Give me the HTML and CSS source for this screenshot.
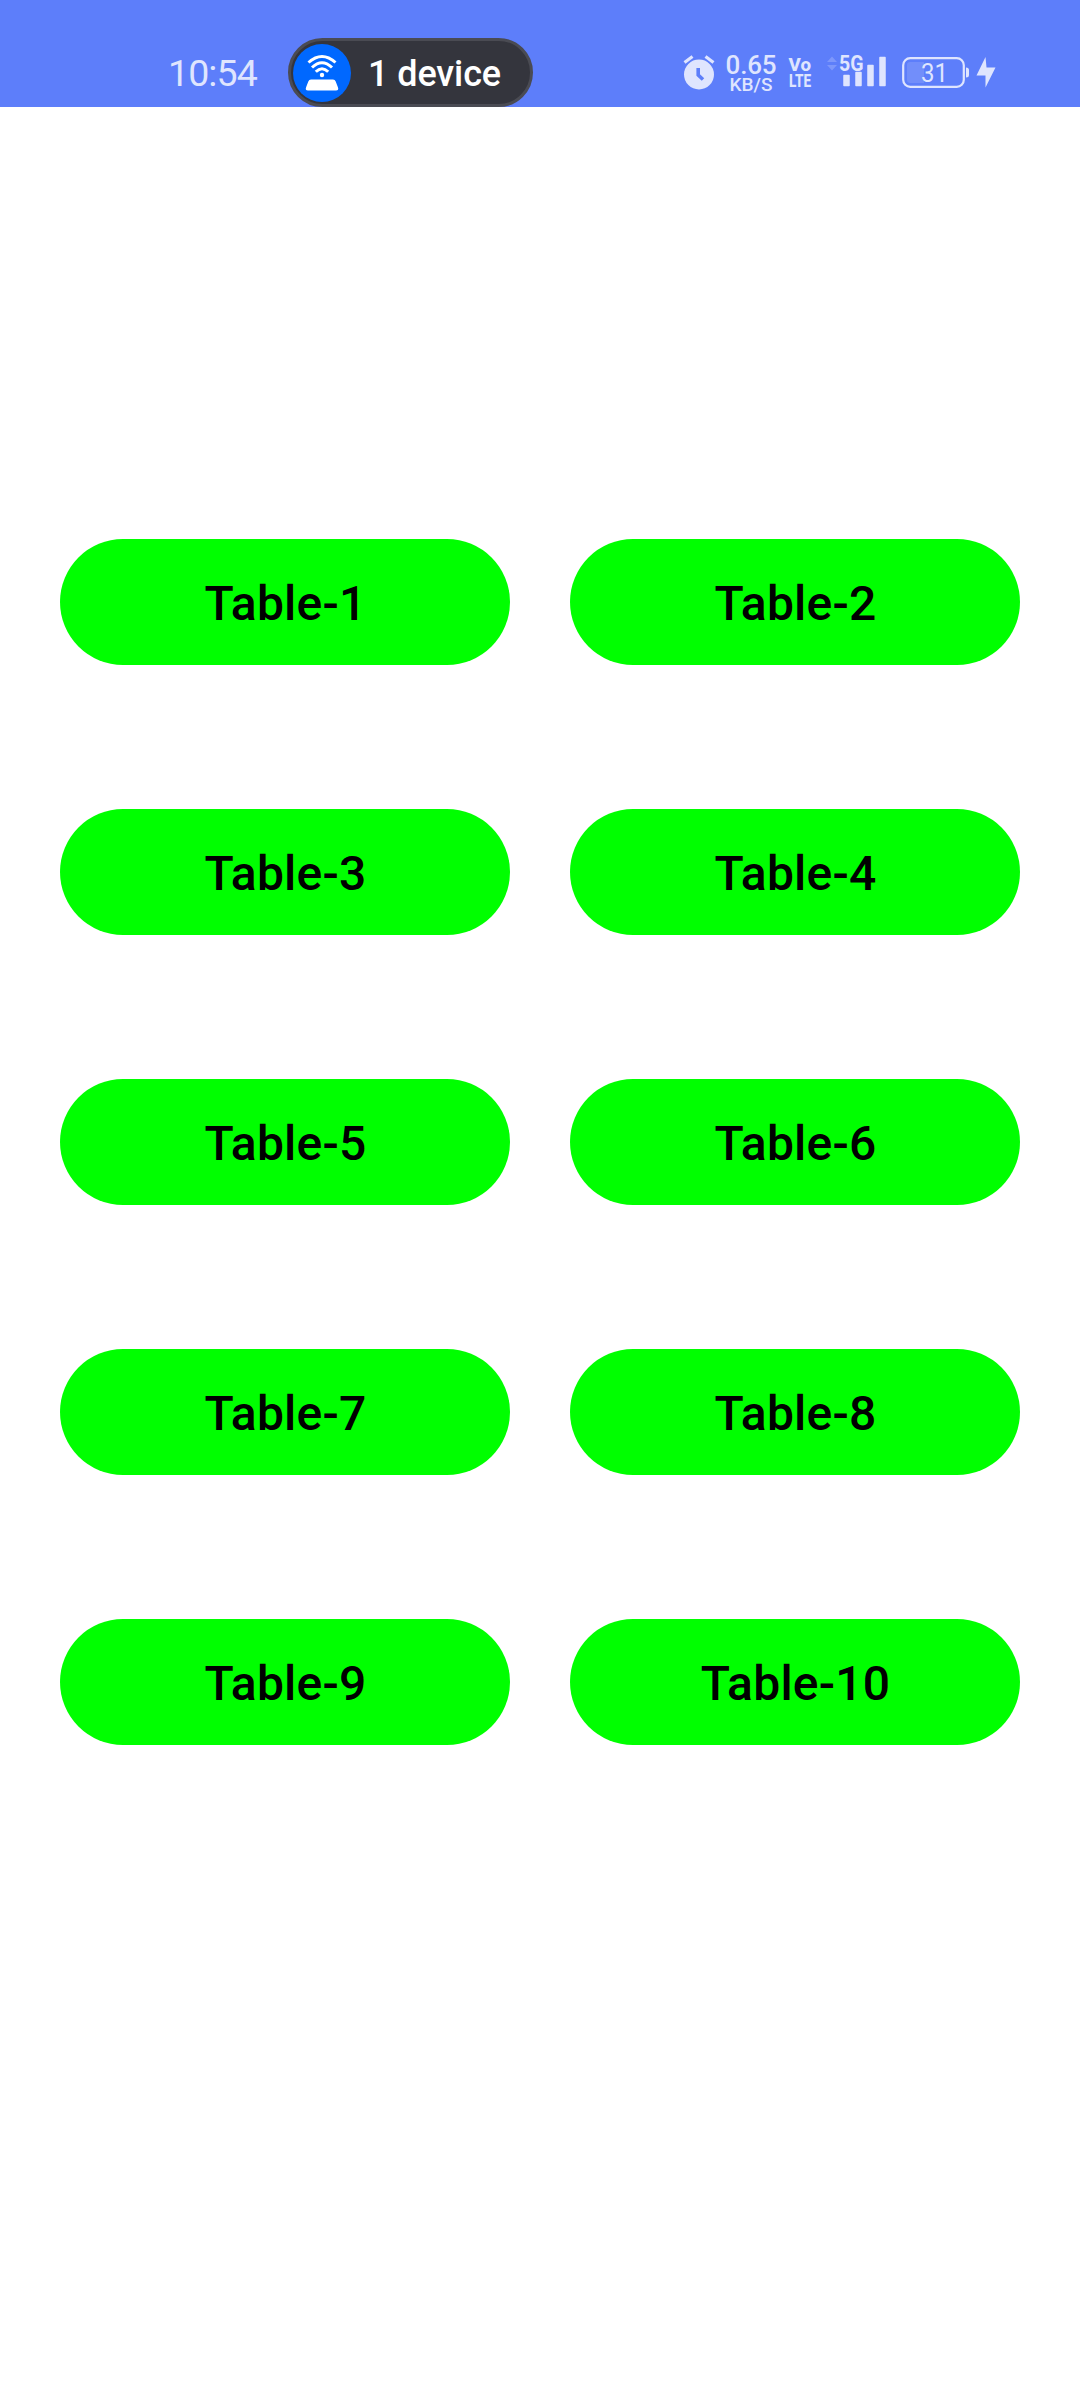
FILE: index.html
```html
<!DOCTYPE html>
<html lang="en">
<head>
<meta charset="utf-8">
<title>Tables</title>
<link rel="stylesheet" href="styles.css">
</head>
<body>
<header class="status-bar">
  <time class="clock">10:54</time>
  <div class="hotspot">
    <svg class="hotspot-icon" width="58" height="58" viewBox="0 0 58 58">
      <circle cx="29" cy="29" r="29" fill="#0068ff"/>
      <g fill="none" stroke="#fff" stroke-width="3">
        <path d="M15.500 18.500Q29 6.500 42.500 18.500"/>
        <path d="M19 23.500Q29 14 39 23.500"/>
        <path d="M22.800 27.800Q29 21.500 35.200 27.800"/>
      </g>
      <circle cx="29" cy="31" r="2.2" fill="#fff"/>
      <path d="M18 35.500H40Q42 35.500 42.700 37.500L45 43.500Q46 46.500 43 46.500H15Q12 46.500 13 43.500L15.300 37.500Q16 35.500 18 35.500Z" fill="#fff"/>
    </svg>
    <span class="hotspot-label">1 device</span>
  </div>
  <div class="indicators">
    <svg width="34" height="36" viewBox="0 0 34 36">
      <circle cx="17" cy="19.500" r="15" class="ink"/>
      <path d="M2.500 7.500L10.500 1.500M23.500 1.500L31.500 7.500" fill="none" class="line" stroke-width="3.200"/>
      <path d="M16.200 13V20L21 24.500" fill="none" class="cut" stroke-width="3.600"/>
    </svg>
    <div class="speed"><span class="speed-value">0.65</span><span class="speed-unit">KB/S</span></div>
    <svg class="volte" width="24" height="40" viewBox="0 -4 24 40">
      <text x="0.500" y="15.500" font-size="19" textLength="22.500" lengthAdjust="spacingAndGlyphs" class="ink heavy">Vo</text>
      <text x="1" y="31.500" font-size="19" textLength="22" lengthAdjust="spacingAndGlyphs" class="ink heavy">LTE</text>
    </svg>
    <svg class="signal" width="62" height="38" viewBox="0 -4 62 38">
      <path d="M0 7L5 1.500L10 7ZM0 10L5 15.500L10 10Z" class="ink" opacity=".25"/>
      <text x="12" y="15.500" font-size="21.500" textLength="24.500" lengthAdjust="spacingAndGlyphs" class="ink semi">5G</text>
      <path d="M17 20.500h5v10h-5ZM29 17.500h5v13h-5ZM41 10.500h5v20h-5ZM53 2.500h5v28h-5Z" class="ink line" stroke-width="1.500" stroke-linejoin="round"/>
    </svg>
    <svg class="battery" width="68" height="33" viewBox="0 0 68 33">
      <rect x="1.200" y="2.200" width="60.600" height="28.600" rx="7" fill="none" class="line" stroke-width="2.200"/>
      <path d="M22 6H8Q5 6 5 9V24Q5 27 8 27H22Z" class="ink" opacity=".16"/>
      <path d="M64 11.500Q67 11.500 67 14V19Q67 21.500 64 21.500Z" class="ink"/>
      <text x="19" y="25.500" font-size="25.500" textLength="27" lengthAdjust="spacingAndGlyphs" class="ink level">31</text>
    </svg>
    <svg class="bolt" width="20" height="32" viewBox="0 0 20 32">
      <path d="M9.500 1L.5 19.500H9.500V31.500L19.500 11.500H10.500Z" class="ink"/>
    </svg>
  </div>
</header>
<main class="tables">
  <button class="table">Table-1</button>
  <button class="table">Table-2</button>
  <button class="table">Table-3</button>
  <button class="table">Table-4</button>
  <button class="table">Table-5</button>
  <button class="table">Table-6</button>
  <button class="table">Table-7</button>
  <button class="table">Table-8</button>
  <button class="table">Table-9</button>
  <button class="table">Table-10</button>
</main>
</body>
</html>
```
FILE: styles.css
```css
* { box-sizing: border-box; }
body {
  margin: 0;
  min-height: 2400px;
  background: #fff;
  font-family: Roboto, "Liberation Sans", sans-serif;
}
.status-bar {
  display: flex;
  align-items: flex-start;
  height: 107px;
  padding: 38px 84px 0 168px;
  background: #5d7efa;
  color: #dfe5fe;
}
.clock {
  width: 120px;
  padding-top: 13px;
  font-size: 37.5px;
  line-height: 44px;
  letter-spacing: -0.9px;
}
.hotspot {
  display: flex;
  align-items: center;
  width: 245px;
  height: 69px;
  padding-left: 2px;
  border: 3px solid #4a4b53;
  border-radius: 35px;
  background: #34353d;
}
.hotspot-icon { flex: none; }
.hotspot-label {
  margin-left: 17px;
  padding-top: 3px;
  color: #fff;
  font-size: 36px;
  font-weight: 500;
  line-height: 42px;
  letter-spacing: -0.1px;
}
.indicators {
  display: flex;
  align-items: flex-start;
  margin-left: auto;
  padding-top: 17px;
}
.indicators svg { flex: none; }
.speed {
  display: flex;
  flex-direction: column;
  align-items: center;
  width: 54px;
  margin-left: 8px;
  font-weight: 500;
}
.speed-value { font-size: 26px; line-height: 20px; letter-spacing: -0.2px; }
.speed-unit { font-size: 19px; line-height: 19px; }
.volte { margin: -4px 0 0 10px; }
.signal { margin: -4px 0 0 15px; }
.battery { margin: 1px 0 0 13px; }
.bolt { margin: 1px 0 0 6px; }
.ink { fill: #dfe5fe; }
.line { stroke: #dfe5fe; }
.cut { stroke: #5d7efa; }
.heavy { font-weight: 800; }
.semi { font-weight: 700; }
.level { font-weight: 400; }
.tables {
  display: grid;
  grid-template-columns: 450px 450px;
  column-gap: 60px;
  row-gap: 144px;
  padding: 432px 60px 0;
}
.table {
  height: 126px;
  padding: 3px 0 0 1px;
  border: 0;
  border-radius: 63px;
  background: #0f0;
  color: #000;
  font: 500 48px/56px Roboto, "Liberation Sans", sans-serif;
  letter-spacing: 0.2px;
}
```
